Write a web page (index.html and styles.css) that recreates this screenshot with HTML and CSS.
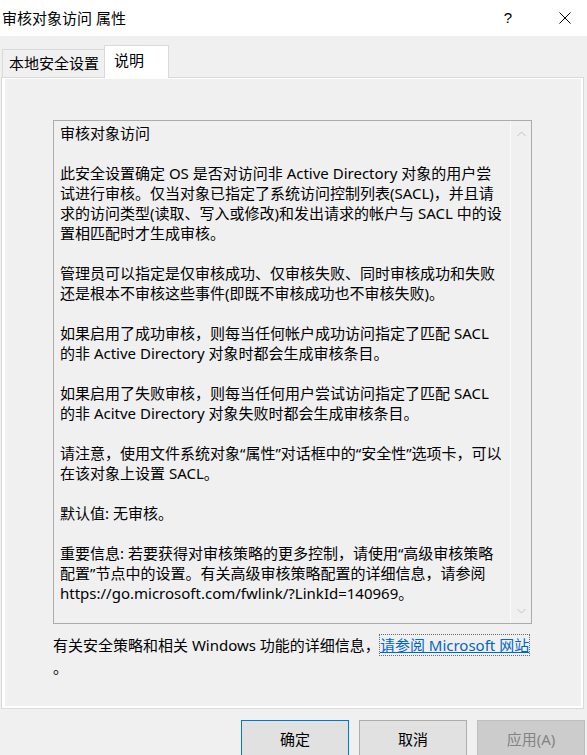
FILE: index.html
```html
<!DOCTYPE html>
<html lang="zh-CN">
<head>
<meta charset="utf-8">
<title>审核对象访问 属性</title>
<link rel="stylesheet" href="styles.css">
</head>
<body>
<div class="window">
  <header class="titlebar">
    <span class="title">审核对象访问 属性</span>
    <span class="help">?</span>
    <span class="close"><svg width="12" height="12" viewBox="0 0 12 12"><path d="M0.5 0.5 L11.5 11.5 M11.5 0.5 L0.5 11.5" stroke="#000" stroke-width="1" fill="none"/></svg></span>
  </header>
  <div class="tabs">
    <div class="tab">本地安全设置</div>
    <div class="tab active">说明</div>
  </div>
  <div class="panel">
    <div class="page">
      <div class="textbox">
        <div class="text">
          <p>审核对象访问</p>
          <p>此安全设置确定 OS 是否对访问非 Active Directory 对象的用户尝<br>试进行审核。仅当对象已指定了系统访问控制列表(SACL)，并且请<br>求的访问类型(读取、写入或修改)和发出请求的帐户与 SACL 中的设<br>置相匹配时才生成审核。</p>
          <p>管理员可以指定是仅审核成功、仅审核失败、同时审核成功和失败<br>还是根本不审核这些事件(即既不审核成功也不审核失败)。</p>
          <p>如果启用了成功审核，则每当任何帐户成功访问指定了匹配 SACL<br>的非 Active Directory 对象时都会生成审核条目。</p>
          <p>如果启用了失败审核，则每当任何用户尝试访问指定了匹配 SACL<br>的非 Acitve Directory 对象失败时都会生成审核条目。</p>
          <p>请注意，使用文件系统对象“属性”对话框中的“安全性”选项卡，可以<br>在该对象上设置 SACL。</p>
          <p>默认值: 无审核。</p>
          <p>重要信息: 若要获得对审核策略的更多控制，请使用“高级审核策略<br>配置”节点中的设置。有关高级审核策略配置的详细信息，请参阅<br>https://go.microsoft.com/fwlink/?LinkId=140969。</p>
        </div>
        <div class="scrollbar">
          <svg width="9" height="6" viewBox="0 0 9 6"><path d="M0.5 5 L4.5 1 L8.5 5" stroke="#c2c2c2" stroke-width="1" fill="none"/></svg>
          <svg width="9" height="6" viewBox="0 0 9 6"><path d="M0.5 1 L4.5 5 L8.5 1" stroke="#c2c2c2" stroke-width="1" fill="none"/></svg>
        </div>
      </div>
      <p class="more">有关安全策略和相关 Windows 功能的详细信息，<a class="link" href="#">请参阅 Microsoft 网站</a><br>。</p>
    </div>
  </div>
  <div class="buttons">
    <button class="btn default">确定</button>
    <button class="btn">取消</button>
    <button class="btn disabled">应用(A)</button>
  </div>
</div>
</body>
</html>
```
FILE: styles.css
```css
html, body {
  margin: 0;
  padding: 0;
}
body {
  width: 587px;
  height: 755px;
  overflow: hidden;
  background: #f0f0f0;
  font-family: "Noto Sans", "Noto Sans CJK SC", sans-serif;
  font-size: 15px;
  color: #000;
}
.window {
  display: flex;
  flex-direction: column;
}
.titlebar {
  height: 36px;
  background: #fff;
  display: flex;
  align-items: center;
}
.title {
  flex: 1;
  padding-left: 2px;
  line-height: 20px;
}
.help {
  width: 30px;
  margin-right: 20px;
  text-align: center;
  font-family: "Liberation Sans", sans-serif;
  font-size: 15px;
  line-height: 20px;
}
.close {
  width: 44px;
  display: flex;
  justify-content: center;
  align-items: center;
}
.tabs {
  height: 41px;
  display: flex;
  align-items: flex-end;
  padding-left: 2px;
}
.tab {
  box-sizing: border-box;
  height: 28px;
  line-height: 26px;
  border: 1px solid #d9d9d9;
  border-bottom: none;
  background: #f0f0f0;
  padding: 0 5px 0 6px;
  white-space: nowrap;
}
.tab.active {
  height: 33px;
  line-height: 29px;
  background: #fff;
  margin-left: -1px;
  margin-bottom: -1px;
  padding: 0 24px 0 9px;
  position: relative;
  z-index: 1;
}
.panel {
  box-sizing: border-box;
  margin-left: 1px;
  width: 583px;
  height: 632px;
  border: 1px solid #d9d9d9;
  background: #fff;
  padding: 1px 2px 2px 3px;
}
.page {
  box-sizing: border-box;
  height: 100%;
  background: #f0f0f0;
  padding: 41px 0 0 48px;
}
.textbox {
  box-sizing: border-box;
  width: 479px;
  height: 504px;
  border: 1px solid #acacac;
  display: flex;
}
.text {
  flex: 1;
  padding: 2px 0 0 6px;
  line-height: 20px;
  white-space: nowrap;
  overflow: hidden;
}
.text p {
  margin: 0 0 20px;
}
.scrollbar {
  width: 20px;
  border-left: 1px solid #fafafa;
  display: flex;
  flex-direction: column;
  justify-content: space-between;
  align-items: center;
  padding: 10px 0 9px;
}
.more {
  margin: 10px 0 0;
  line-height: 22px;
  white-space: nowrap;
}
.link {
  color: #0066cc;
  text-decoration: underline;
  outline: 1px dotted #6a6a6a;
}
.buttons {
  display: flex;
  justify-content: flex-end;
  gap: 10px;
  padding: 11px 2px 0 0;
}
.btn {
  box-sizing: border-box;
  width: 108px;
  height: 36px;
  font-family: "Noto Sans", "Noto Sans CJK SC", sans-serif;
  font-size: 15px;
  color: #000;
  background: #e1e1e1;
  border: 1px solid #adadad;
  padding: 0;
}
.btn.default {
  border-color: #0078d7;
}
.btn.disabled {
  background: #cccccc;
  border-color: #bfbfbf;
  color: #838383;
}
```
